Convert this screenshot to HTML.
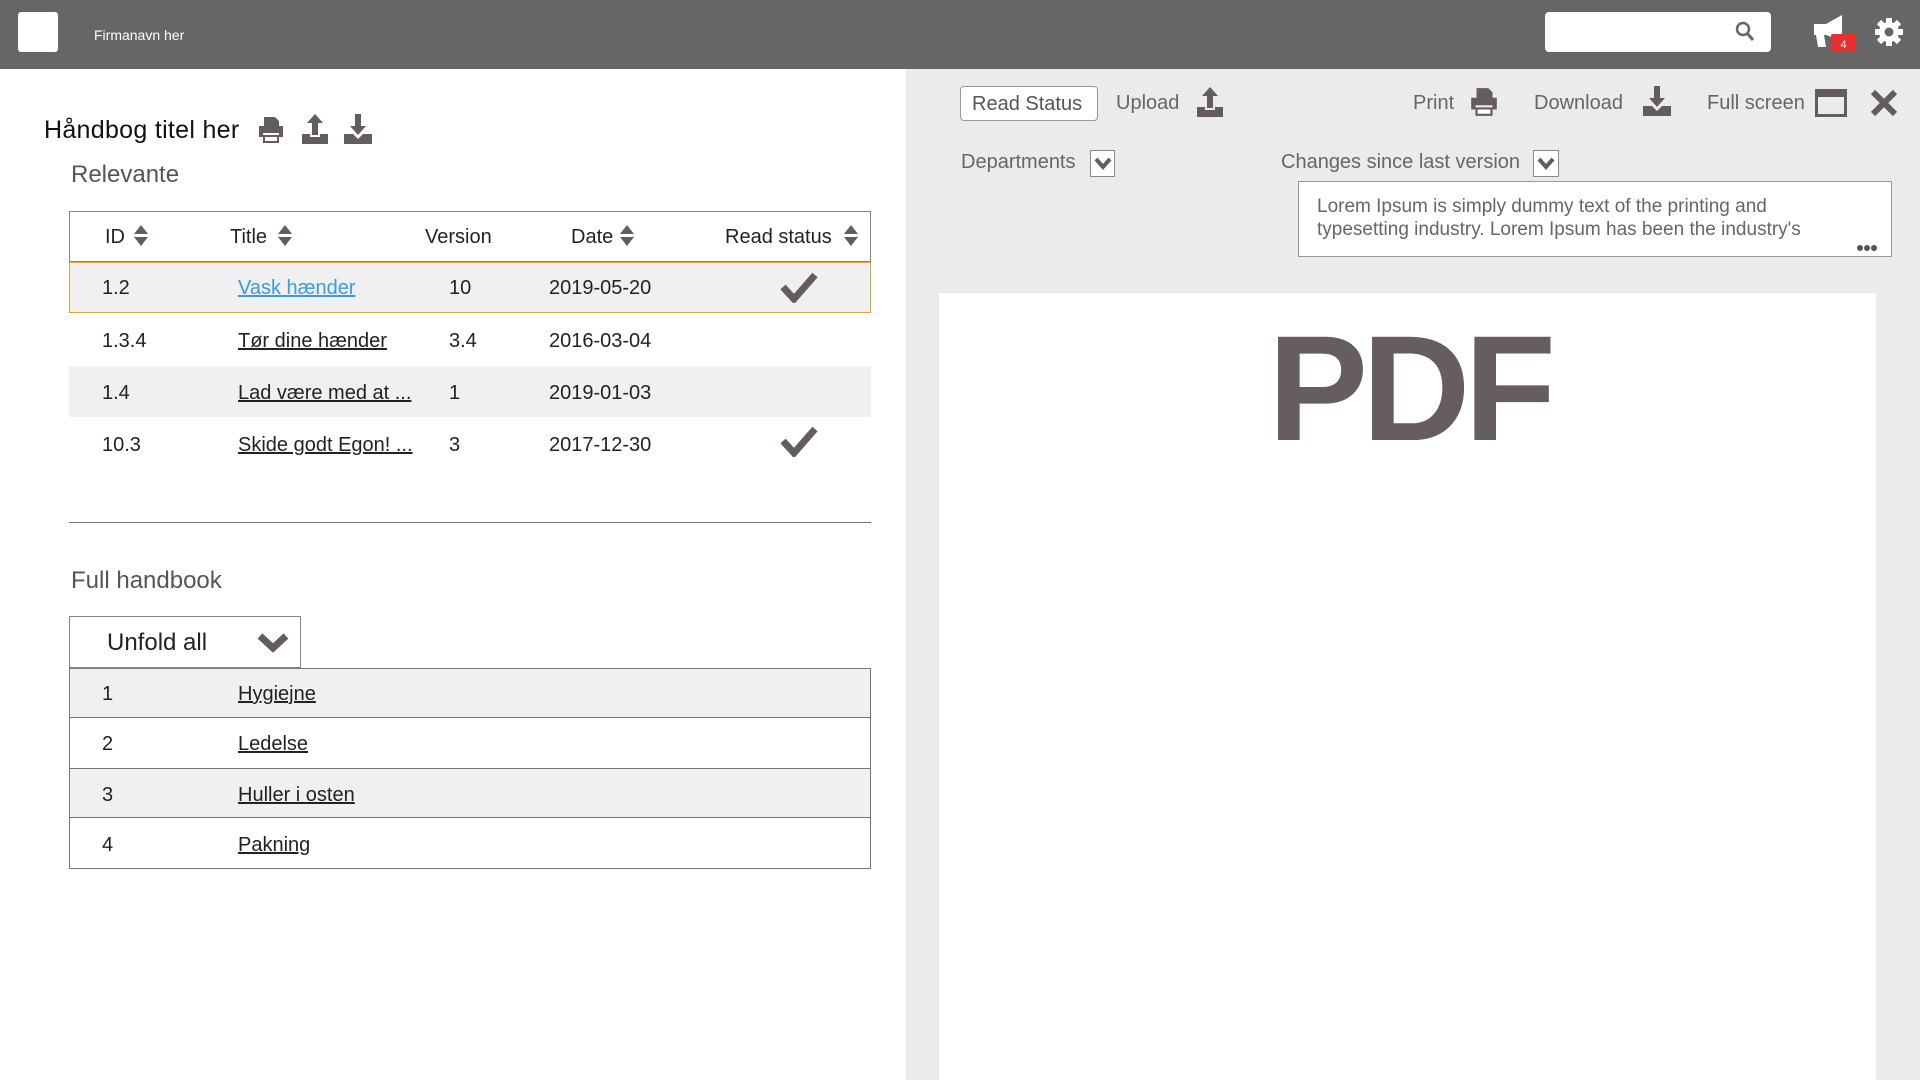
<!DOCTYPE html>
<html><head><meta charset="utf-8"><style>
*{margin:0;padding:0;box-sizing:border-box}
body{width:1920px;height:1080px;overflow:hidden;position:relative;background:#fff;font-family:"Liberation Sans",sans-serif;color:#333}
.a{position:absolute;white-space:nowrap}
.hdr{left:0;top:0;width:1920px;height:69px;background:#666}
.right{left:906px;top:69px;width:1014px;height:1011px;background:#ebebeb}
.t{font-size:20px;color:#222;line-height:24px}
.row{position:absolute;left:69px;width:802px}
u{text-decoration:underline}
.ic{fill:#655c5c}
.lbl{font-size:20px;color:#666;line-height:24px}
</style></head><body>
<div class="a hdr"></div>
<div class="a" style="left:18px;top:12px;width:40px;height:40px;background:#fff;border-radius:3px"></div>
<div class="a" style="left:94px;top:27px;font-size:14px;color:#fff">Firmanavn her</div>
<div class="a" style="left:1545px;top:12px;width:226px;height:40px;background:#fff;border-radius:4px"></div>
<svg class="a" style="left:1735px;top:21px" width="20" height="22" viewBox="0 0 20 22"><circle cx="8" cy="8" r="6" fill="none" stroke="#666" stroke-width="2.5"/><path d="M12 12l6 7" stroke="#666" stroke-width="3"/></svg>
<svg class="a" style="left:1810px;top:12px" width="46" height="40" viewBox="0 0 46 40"><path d="M4 12h12l16-9v26l-16-6h-2l2 12h-8l-2-12h-2z" fill="#fff"/><rect x="21" y="22" width="25" height="18" fill="#e53030" rx="2"/><text x="33.5" y="36" font-size="11" fill="#fff" text-anchor="middle" font-family="Liberation Sans">4</text></svg>
<svg class="a" style="left:1873px;top:16px" width="32" height="32" viewBox="0 0 32 32"><g fill="#fff"><circle cx="16" cy="16" r="10"/><g stroke="#fff" stroke-width="6"><path d="M16 2v28M2 16h28M6 6l20 20M26 6L6 26"/></g></g><circle cx="16" cy="16" r="4.5" fill="#666"/></svg>

<div class="a" style="left:44px;top:116px;font-size:25px;color:#111;letter-spacing:0.3px">Håndbog titel her</div>
<svg class="a" style="left:256px;top:115px" width="30" height="30" viewBox="0 0 30 30"><path class="ic" d="M8 2h11l4 4v5H8z M3 11h24v11h-4v-4H7v4H3z M7 20h16v8H7z"/><rect x="9" y="22" width="12" height="4" fill="#fff"/></svg>
<svg class="a" style="left:300px;top:113px" width="30" height="32" viewBox="0 0 30 32"><path class="ic" d="M15 1l8 9h-5v12h-6V10H7z M2 21h8v3h10v-3h8v10H2z"/></svg>
<svg class="a" style="left:342px;top:113px" width="32" height="32" viewBox="0 0 32 32"><path class="ic" d="M13 1h6v12h5l-8 9-8-9h5z M2 21h9l5 5 5-5h9v10H2z"/></svg>

<div class="a" style="left:71px;top:161px;font-size:24px;color:#555">Relevante</div>

<div class="a" style="left:69px;top:211px;width:802px;height:51px;border:1.5px solid #888"></div>
<div class="row t" style="top:225px">
<span class="a" style="left:36px">ID</span><span class="a" style="left:161px">Title</span><span class="a" style="left:356px">Version</span><span class="a" style="left:502px">Date</span><span class="a" style="left:656px">Read status</span>
</div>
<svg class="a" style="left:133px;top:224px" width="16" height="24"><path class="ic" d="M8 1l7 9H1z M1 13h14l-7 9z"/></svg>
<svg class="a" style="left:277px;top:224px" width="16" height="24"><path class="ic" d="M8 1l7 9H1z M1 13h14l-7 9z"/></svg>
<svg class="a" style="left:619px;top:224px" width="16" height="24"><path class="ic" d="M8 1l7 9H1z M1 13h14l-7 9z"/></svg>
<svg class="a" style="left:843px;top:224px" width="16" height="24"><path class="ic" d="M8 1l7 9H1z M1 13h14l-7 9z"/></svg>

<div class="a" style="left:69px;top:262px;width:802px;height:51px;background:#f0f0f0;border:1.5px solid #e3a33a"></div>
<div class="row t" style="top:276px"><span class="a" style="left:33px">1.2</span><u class="a" style="left:169px;color:#3a9ae8">Vask hænder</u><span class="a" style="left:380px">10</span><span class="a" style="left:480px">2019-05-20</span></div>
<svg class="a" style="left:780px;top:271px" width="38" height="32"><path d="M3 16l11 12L35 4" fill="none" stroke="#655c5c" stroke-width="7"/></svg>
<div class="row t" style="top:329px"><span class="a" style="left:33px">1.3.4</span><u class="a" style="left:169px">Tør dine hænder</u><span class="a" style="left:380px">3.4</span><span class="a" style="left:480px">2016-03-04</span></div>
<div class="a" style="left:69px;top:366px;width:802px;height:51px;background:#f0f0f0"></div>
<div class="row t" style="top:381px"><span class="a" style="left:33px">1.4</span><u class="a" style="left:169px">Lad være med at ...</u><span class="a" style="left:380px">1</span><span class="a" style="left:480px">2019-01-03</span></div>
<div class="row t" style="top:433px"><span class="a" style="left:33px">10.3</span><u class="a" style="left:169px">Skide godt Egon! ...</u><span class="a" style="left:380px">3</span><span class="a" style="left:480px">2017-12-30</span></div>
<svg class="a" style="left:780px;top:425px" width="38" height="32"><path d="M3 16l11 12L35 4" fill="none" stroke="#655c5c" stroke-width="7"/></svg>

<div class="a" style="left:69px;top:522px;width:802px;height:1px;background:#777"></div>
<div class="a" style="left:71px;top:567px;font-size:24px;color:#555">Full handbook</div>
<div class="a" style="left:69px;top:616px;width:232px;height:52px;border:1px solid #888;background:#fff"></div>
<div class="a" style="left:107px;top:629px;font-size:24px;color:#222">Unfold all</div>
<svg class="a" style="left:256px;top:632px" width="34" height="22"><path d="M4 4l13 12L30 4" fill="none" stroke="#655c5c" stroke-width="7"/></svg>

<div class="a" style="left:69px;top:668px;width:802px;height:201px;border:1.5px solid #777"></div>
<div class="a" style="left:70px;top:669px;width:800px;height:49px;background:#f0f0f0;border-bottom:1px solid #777"></div>
<div class="a" style="left:70px;top:718px;width:800px;height:51px;border-bottom:1px solid #777"></div>
<div class="a" style="left:70px;top:769px;width:800px;height:49px;background:#f0f0f0;border-bottom:1px solid #777"></div>
<div class="row t" style="top:682px"><span class="a" style="left:33px">1</span><u class="a" style="left:169px">Hygiejne</u></div>
<div class="row t" style="top:732px"><span class="a" style="left:33px">2</span><u class="a" style="left:169px">Ledelse</u></div>
<div class="row t" style="top:783px"><span class="a" style="left:33px">3</span><u class="a" style="left:169px">Huller i osten</u></div>
<div class="row t" style="top:833px"><span class="a" style="left:33px">4</span><u class="a" style="left:169px">Pakning</u></div>

<div class="a right"></div>
<div class="a" style="left:960px;top:86px;width:138px;height:35px;background:#fff;border:1px solid #999;border-radius:4px"></div>
<div class="a lbl" style="left:972px;top:92px;color:#555">Read Status</div>
<div class="a lbl" style="left:1116px;top:91px">Upload</div>
<svg class="a" style="left:1195px;top:86px" width="30" height="32" viewBox="0 0 30 32"><path class="ic" d="M15 1l8 9h-5v12h-6V10H7z M2 21h8v3h10v-3h8v10H2z"/></svg>
<div class="a lbl" style="left:1413px;top:91px">Print</div>
<svg class="a" style="left:1468px;top:86px" width="32" height="32" viewBox="0 0 30 30"><path class="ic" d="M8 2h11l4 4v5H8z M3 11h24v11h-4v-4H7v4H3z M7 20h16v8H7z"/><rect x="9" y="22" width="12" height="4" fill="#fff"/></svg>
<div class="a lbl" style="left:1534px;top:91px">Download</div>
<svg class="a" style="left:1641px;top:85px" width="32" height="32" viewBox="0 0 32 32"><path class="ic" d="M13 1h6v12h5l-8 9-8-9h5z M2 21h9l5 5 5-5h9v10H2z"/></svg>
<div class="a lbl" style="left:1707px;top:91px">Full screen</div>
<svg class="a" style="left:1815px;top:89px" width="32" height="28"><rect x="1.5" y="1.5" width="29" height="25" fill="none" stroke="#655c5c" stroke-width="3"/><rect x="1" y="1" width="30" height="7" fill="#655c5c"/></svg>
<svg class="a" style="left:1870px;top:89px" width="28" height="28"><path d="M3 3l22 22M25 3L3 25" stroke="#655c5c" stroke-width="6"/></svg>

<div class="a lbl" style="left:961px;top:150px">Departments</div>
<div class="a" style="left:1090px;top:150px;width:25px;height:27px;border:1px solid #888;background:#fff"></div>
<svg class="a" style="left:1093px;top:155px" width="20" height="16"><path d="M3 4l7 8 7-8" fill="none" stroke="#655c5c" stroke-width="4"/></svg>
<div class="a lbl" style="left:1281px;top:150px">Changes since last version</div>
<div class="a" style="left:1533px;top:150px;width:26px;height:27px;border:1px solid #888;background:#fff"></div>
<svg class="a" style="left:1536px;top:155px" width="20" height="16"><path d="M3 4l7 8 7-8" fill="none" stroke="#655c5c" stroke-width="4"/></svg>
<div class="a" style="left:1298px;top:181px;width:594px;height:76px;background:#fff;border:1.5px solid #999"></div>
<div class="a" style="left:1317px;top:195px;font-size:19px;line-height:23px;color:#666">Lorem Ipsum is simply dummy text of the printing and<br>typesetting industry. Lorem Ipsum has been the industry's</div>
<svg class="a" style="left:1856px;top:244px" width="22" height="8"><circle cx="4" cy="4" r="3" fill="#555"/><circle cx="11" cy="4" r="3" fill="#555"/><circle cx="18" cy="4" r="3" fill="#555"/></svg>

<div class="a" style="left:939px;top:293px;width:937px;height:787px;background:#fff"></div>
<div class="a" style="left:1268px;top:308px;font-size:150px;font-weight:bold;color:#665e5e;line-height:160px;letter-spacing:-6px">PDF</div>
</body></html>
